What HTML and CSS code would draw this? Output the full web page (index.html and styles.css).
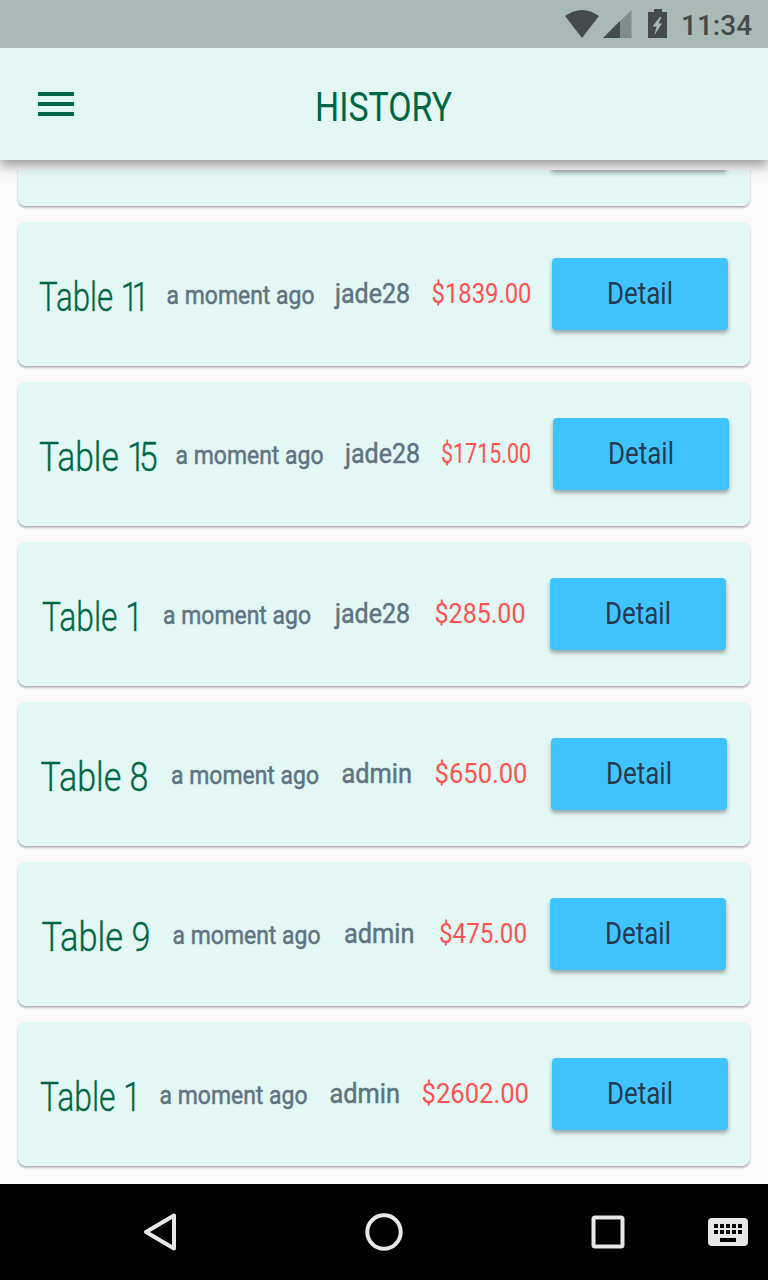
FILE: index.html
```html
<!DOCTYPE html>
<html lang="en">
<head>
<meta charset="utf-8">
<title>History</title>
<link rel="stylesheet" href="styles.css">
</head>
<body>
<div class="screen">
  <div class="status">
    <svg class="wifi" width="36" height="30" viewBox="0 0 36 30"><path d="M1 7Q18-5 35 7L18 29Z"/></svg>
    <svg class="signal" width="29" height="30" viewBox="0 0 29 30"><path opacity=".4" d="M0 29 28.500 1V29Z"/><path d="M0 29 17 12V29Z"/></svg>
    <svg class="battery" width="20" height="30" viewBox="0 0 20 30"><path fill-rule="evenodd" d="M6 0H14V3H19V29H0V3H6ZM12 8 4.500 17.500H8.500L6.500 26 14 14.500H10.500L13.500 8Z"/></svg>
    <span class="clock">11:34</span>
  </div>
  <header class="appbar">
    <svg class="menu" width="36" height="24" viewBox="0 0 36 24"><path d="M0 0H36V4H0ZM0 10H36V14H0ZM0 20H36V24H0Z"/></svg>
    <svg class="title" width="136" height="48"><text x="-1" y="41" textLength="137" lengthAdjust="spacingAndGlyphs">HISTORY</text></svg>
  </header>
  <main class="viewport">
    <div class="list">
      <article class="card clipped"><span class="button"></span></article>
      <article class="card">
        <svg class="name" width="105" height="72"><text x="-1" y="53" textLength="104" lengthAdjust="spacingAndGlyphs">Table <tspan class="narrow">11</tspan></text></svg>
        <svg class="time" width="147" height="72"><text x="-0.500" y="45.500" textLength="148" lengthAdjust="spacingAndGlyphs">a moment ago</text></svg>
        <svg class="user" width="74" height="72"><text x="0" y="45" textLength="75" lengthAdjust="spacingAndGlyphs">jade28</text></svg>
        <svg class="price" width="99" height="72"><text x="0.500" y="45" textLength="100" lengthAdjust="spacingAndGlyphs">$1839.00</text></svg>
        <button class="button"><svg width="66" height="72"><text x="0" y="46" textLength="66" lengthAdjust="spacingAndGlyphs">Detail</text></svg></button>
      </article>
      <article class="card">
        <svg class="name" width="115" height="72"><text x="-1" y="53" textLength="112" lengthAdjust="spacingAndGlyphs">Table <tspan class="narrow">15</tspan></text></svg>
        <svg class="time" width="147" height="72"><text x="-0.500" y="45.500" textLength="148" lengthAdjust="spacingAndGlyphs">a moment ago</text></svg>
        <svg class="user" width="74" height="72"><text x="0" y="45" textLength="75" lengthAdjust="spacingAndGlyphs">jade28</text></svg>
        <svg class="price" width="91" height="72"><text x="1" y="45" textLength="90" lengthAdjust="spacingAndGlyphs">$1715.00</text></svg>
        <button class="button"><svg width="66" height="72"><text x="0" y="46" textLength="66" lengthAdjust="spacingAndGlyphs">Detail</text></svg></button>
      </article>
      <article class="card">
        <svg class="name" width="96" height="72"><text x="-1" y="53" textLength="101" lengthAdjust="spacingAndGlyphs">Table 1</text></svg>
        <svg class="time" width="147" height="72"><text x="0" y="45.500" textLength="148" lengthAdjust="spacingAndGlyphs">a moment ago</text></svg>
        <svg class="user" width="75" height="72"><text x="0" y="45" textLength="75" lengthAdjust="spacingAndGlyphs">jade28</text></svg>
        <svg class="price" width="91" height="72"><text x="0.500" y="45" textLength="91" lengthAdjust="spacingAndGlyphs">$285.00</text></svg>
        <button class="button"><svg width="66" height="72"><text x="0" y="46" textLength="66" lengthAdjust="spacingAndGlyphs">Detail</text></svg></button>
      </article>
      <article class="card">
        <svg class="name" width="107" height="72"><text x="-0.500" y="53" textLength="108" lengthAdjust="spacingAndGlyphs">Table 8</text></svg>
        <svg class="time" width="147" height="72"><text x="-1" y="45.500" textLength="148" lengthAdjust="spacingAndGlyphs">a moment ago</text></svg>
        <svg class="user" width="69" height="72"><text x="-0.500" y="45" textLength="70.500" lengthAdjust="spacingAndGlyphs">admin</text></svg>
        <svg class="price" width="93" height="72"><text x="0.500" y="45" textLength="93" lengthAdjust="spacingAndGlyphs">$650.00</text></svg>
        <button class="button"><svg width="66" height="72"><text x="0" y="46" textLength="66" lengthAdjust="spacingAndGlyphs">Detail</text></svg></button>
      </article>
      <article class="card">
        <svg class="name" width="107" height="72"><text x="-0.500" y="53" textLength="109" lengthAdjust="spacingAndGlyphs">Table 9</text></svg>
        <svg class="time" width="147" height="72"><text x="-0.500" y="45.500" textLength="148" lengthAdjust="spacingAndGlyphs">a moment ago</text></svg>
        <svg class="user" width="69" height="72"><text x="0" y="45" textLength="70.500" lengthAdjust="spacingAndGlyphs">admin</text></svg>
        <svg class="price" width="88" height="72"><text x="1" y="45" textLength="88" lengthAdjust="spacingAndGlyphs">$475.00</text></svg>
        <button class="button"><svg width="66" height="72"><text x="0" y="46" textLength="66" lengthAdjust="spacingAndGlyphs">Detail</text></svg></button>
      </article>
      <article class="card">
        <svg class="name" width="97" height="72"><text x="-1" y="53" textLength="101" lengthAdjust="spacingAndGlyphs">Table 1</text></svg>
        <svg class="time" width="147" height="72"><text x="-0.500" y="45.500" textLength="148" lengthAdjust="spacingAndGlyphs">a moment ago</text></svg>
        <svg class="user" width="69" height="72"><text x="-0.500" y="45" textLength="70.500" lengthAdjust="spacingAndGlyphs">admin</text></svg>
        <svg class="price" width="108" height="72"><text x="0.500" y="45" textLength="107.500" lengthAdjust="spacingAndGlyphs">$2602.00</text></svg>
        <button class="button"><svg width="66" height="72"><text x="0" y="46" textLength="66" lengthAdjust="spacingAndGlyphs">Detail</text></svg></button>
      </article>
    </div>
  </main>
  <nav class="navbar">
    <svg width="34" height="40" viewBox="0 0 34 40"><path d="M31 3.500V36.500L3 20Z"/></svg>
    <svg width="40" height="40" viewBox="0 0 40 40"><circle cx="20" cy="20" r="16.700"/></svg>
    <svg width="34" height="34" viewBox="0 0 34 34"><rect x="2.500" y="2.500" width="29" height="29" rx="1.500"/></svg>
    <svg class="keyboard" width="40" height="28" viewBox="0 0 40 28"><rect width="40" height="28" rx="4"/><path d="M6 6h4v4H6zM12 6h4v4h-4zM18 6h4v4h-4zM24 6h4v4h-4zM30 6h4v4h-4zM6 12h4v4H6zM12 12h4v4h-4zM18 12h4v4h-4zM24 12h4v4h-4zM30 12h4v4h-4zM12 20h16v4H12z"/></svg>
  </nav>
</div>
</body>
</html>
```
FILE: styles.css
```css
* { box-sizing: border-box; }
body { margin: 0; background: #fafafa; font-family: Roboto, sans-serif; }
svg { display: block; flex: none; overflow: visible; }
.screen { width: 768px; height: 1280px; display: flex; flex-direction: column; overflow: hidden; }

.status { position: relative; z-index: 1; height: 48px; flex: none; display: flex; justify-content: flex-end; align-items: flex-start; padding: 9px 16px 0 0; background: #a9b9b6; color: #454b4a; fill: #454b4a; }
.signal { margin-left: 3px; }
.battery { margin-left: 16px; }
.clock { width: 71px; margin-left: 13px; font-size: 28px; line-height: 33px; font-weight: 500; white-space: nowrap; }

.appbar { height: 112px; flex: none; display: grid; grid-template-columns: 316px 136px; align-items: start; background: #e3f7f4; box-shadow: 0 4px 12px 1px rgba(0,0,0,.42); }
.menu { margin: 44px 0 0 38px; fill: #006644; }
.title { margin-top: 32px; font-size: 40px; fill: #006644; }

.viewport { height: 1024px; flex: none; padding-top: 10px; }
.list { height: 1014px; overflow: hidden; display: flex; flex-direction: column; gap: 16px; padding: 0 18px; }
.card { height: 144px; flex: none; display: flex; align-items: center; justify-content: space-evenly; background: #e3f7f4; border-radius: 8px; box-shadow: 0 2px 2px rgba(0,0,0,.22), 0 1px 2px rgba(0,0,0,.13); }
.clipped { margin-top: -108px; justify-content: flex-end; padding-right: 23px; background: linear-gradient(#d8eae7 108px, #e3f7f4 116px); }
.card text { stroke-linejoin: round; }
.name { font-size: 40.500px; font-weight: 300; fill: #006644; stroke: #006644; stroke-width: .35px; }
.narrow { letter-spacing: -8px; }
.time { font-size: 25.500px; fill: #5f7380; stroke: #5f7380; stroke-width: .5px; }
.user { font-size: 28.500px; fill: #5f7380; stroke: #5f7380; stroke-width: .5px; }
.price { font-size: 28.500px; font-weight: 400; fill: #ff5252; }
.button { width: 176px; height: 72px; flex: none; display: flex; align-items: center; justify-content: center; padding: 0; border: 0; border-radius: 4px; background: #40c4ff; box-shadow: 0 3px 4px rgba(0,0,0,.32); font-family: inherit; font-size: 31px; font-weight: 400; fill: #263b50; }

.navbar { height: 96px; flex: none; display: grid; grid-template-columns: 221px 227px 117px 40px; padding-left: 143px; align-items: center; background: #000; fill: none; stroke: #e8e8e8; stroke-width: 4px; stroke-linejoin: round; }
.keyboard { fill: #e8e8e8; stroke: none; }
.keyboard path { fill: #000; }
```
